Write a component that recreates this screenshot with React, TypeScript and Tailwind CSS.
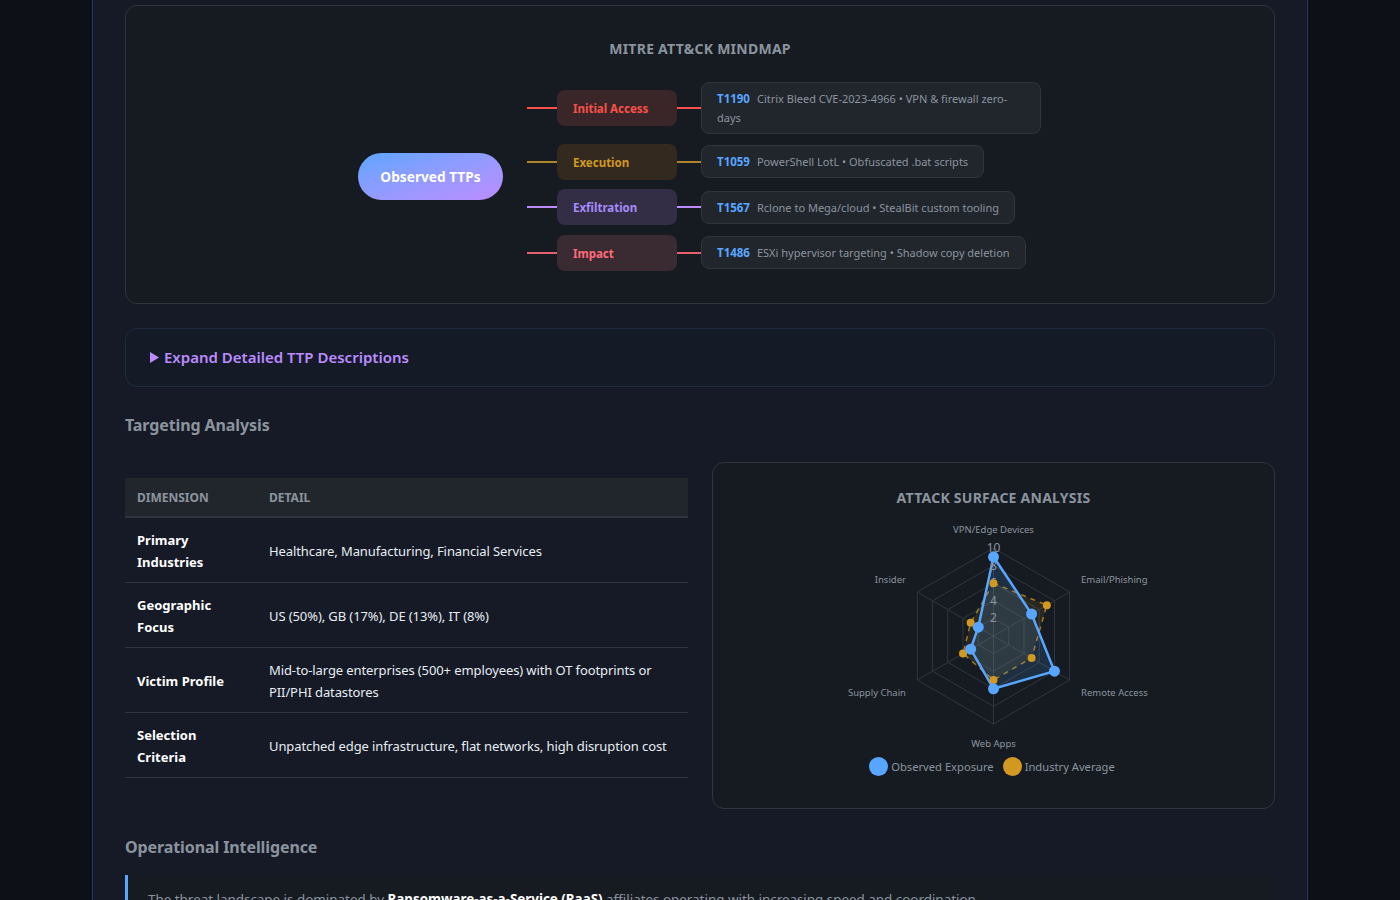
const branches = [
  { name: 'Initial Access', line: 'bg-[#f85149]', node: 'bg-[#3a2528] text-[#f85149]', id: 'T1190', text: 'Citrix Bleed CVE-2023-4966 • VPN & firewall zero-days' },
  { name: 'Execution', line: 'bg-[#b0842a]', node: 'bg-[#33291f] text-[#d29922]', id: 'T1059', text: 'PowerShell LotL • Obfuscated .bat scripts' },
  { name: 'Exfiltration', line: 'bg-[#bc8cff]', node: 'bg-[#332d45] text-[#a78bfa]', id: 'T1567', text: 'Rclone to Mega/cloud • StealBit custom tooling' },
  { name: 'Impact', line: 'bg-[#e5606e]', node: 'bg-[#3a2a32] text-[#ff6b7a]', id: 'T1486', text: 'ESXi hypervisor targeting • Shadow copy deletion' },
];

const rows = [
  { dim: 'Primary Industries', detail: 'Healthcare, Manufacturing, Financial Services' },
  { dim: 'Geographic Focus', detail: 'US (50%), GB (17%), DE (13%), IT (8%)' },
  { dim: 'Victim Profile', detail: 'Mid-to-large enterprises (500+ employees) with OT footprints or PII/PHI datastores' },
  { dim: 'Selection Criteria', detail: 'Unpatched edge infrastructure, flat networks, high disruption cost' },
];

// radar geometry, svg sits right under the card title
const cx = 280.5;
const cy = 127;
const unit = 8.8;
const angles = [0, 1, 2, 3, 4, 5].map((i) => (Math.PI / 3) * i - Math.PI / 2);
const pt = (i: number, v: number) => [cx + Math.cos(angles[i]) * v * unit, cy + Math.sin(angles[i]) * v * unit];
const poly = (vals: number[]) => vals.map((v, i) => pt(i, v).join(',')).join(' ');
const observed = [9, 5, 8, 6, 3, 2];
const average = [6, 7, 5, 5, 4, 3];

function Radar() {
  return (
    <svg width="561" height="246" viewBox="0 0 561 246" className="block">
      {[2, 4, 6, 8, 10].map((v) => (
        <polygon key={v} points={poly([v, v, v, v, v, v])} fill="none" stroke="#30363d" strokeWidth="1" />
      ))}
      {[0, 1, 2, 3, 4, 5].map((i) => {
        const [x, y] = pt(i, 10);
        return <line key={i} x1={cx} y1={cy} x2={x} y2={y} stroke="#30363d" strokeWidth="1" />;
      })}
      <polygon points={poly(average)} fill="#d29922" fillOpacity="0.1" stroke="#d29922" strokeWidth="1.5" strokeOpacity="0.75" strokeDasharray="5 5" />
      <polygon points={poly(observed)} fill="#58a6ff" fillOpacity="0.15" stroke="#58a6ff" strokeWidth="2.5" />
      <g fill="#8b949e" fontSize="12" textAnchor="middle">
        {[2, 4, 6, 8, 10].map((v) => (
          <text key={v} x={cx} y={cy - v * unit + 4}>{v}</text>
        ))}
      </g>
      {average.map((v, i) => {
        const [x, y] = pt(i, v);
        return <circle key={i} cx={x} cy={y} r="4" fill="#d29922" />;
      })}
      {observed.map((v, i) => {
        const [x, y] = pt(i, v);
        return <circle key={i} cx={x} cy={y} r="5.5" fill="#58a6ff" />;
      })}
      <g fill="#8b949e" fontSize="9.5">
        <text x={cx} y="23.5" textAnchor="middle">VPN/Edge Devices</text>
        <text x="368" y="73.5">Email/Phishing</text>
        <text x="368" y="186.5">Remote Access</text>
        <text x={cx} y="237.5" textAnchor="middle">Web Apps</text>
        <text x="193" y="186.5" textAnchor="end">Supply Chain</text>
        <text x="193" y="73.5" textAnchor="end">Insider</text>
      </g>
    </svg>
  );
}

export default function App() {
  return (
    <div className="h-[900px] overflow-hidden bg-[#0d1117] font-['Noto_Sans',sans-serif]">
      <div className="mx-auto h-full w-[1216px] border-x border-[#243a5c] bg-[#161a26] px-8 pt-[5px]">
        {/* Mindmap */}
        <div className="rounded-xl border border-[#30363d] bg-[#161b22] px-8 pb-8 pt-8">
          <h4 className="mb-[22px] text-center text-sm font-bold leading-[22px] tracking-[0.25px] text-[#8b949e]">MITRE ATT&amp;CK MINDMAP</h4>
          <div className="flex items-center justify-center pr-px">
            <div className="flex h-[47px] w-[145px] items-center justify-center rounded-full bg-gradient-to-br from-[#58a6ff] to-[#bc8cff] pt-[2px] text-[13.7px] font-bold text-white">
              Observed TTPs
            </div>
            <div className="ml-6 flex flex-col gap-[9.5px]">
              {branches.map((b) => (
                <div key={b.id} className="flex items-center">
                  <div className={`h-0.5 w-[30px] ${b.line}`} />
                  <div className={`flex h-9 w-[120px] items-center rounded-lg px-4 pt-[2px] text-[11.5px] font-bold ${b.node}`}>{b.name}</div>
                  <div className={`h-0.5 w-6 ${b.line}`} />
                  <div className="max-w-[340px] rounded-lg border border-[#30363d] bg-[#21262d] px-[15px] py-1.5 text-[11px] leading-[19px] text-[#8b949e]">
                    <span className="mr-[7px] text-[11.5px] font-bold text-[#58a6ff]">{b.id}</span>
                    {b.text}
                  </div>
                </div>
              ))}
            </div>
          </div>
        </div>

        {/* Expandable */}
        <details className="mt-6 rounded-xl border border-[#1e2a3d] bg-[#141a26] px-6 py-[18px]">
          <summary className="flex cursor-pointer list-none items-center gap-[5px] text-[15px] font-semibold leading-[21px] text-[#bc8cff]">
            <svg width="9" height="11" viewBox="0 0 9 11" fill="#bc8cff"><path d="M0 0l9 5.5L0 11z" /></svg>
            Expand Detailed TTP Descriptions
          </summary>
        </details>

        <h3 className="mt-[26px] text-base font-bold leading-6 tracking-[-0.1px] text-[#8b949e]">Targeting Analysis</h3>

        <div className="mt-[25px] grid grid-cols-2 gap-6">
          <div className="pt-4">
            <table className="w-full border-collapse text-[13px] leading-[22px] text-[#e6edf3]">
              <thead>
                <tr className="border-b-2 border-[#30363d] bg-[#21262d]">
                  <th className="w-[132px] px-3 pb-[9px] pt-[11px] text-left text-xs font-bold uppercase leading-[18px] text-[#8b949e]">Dimension</th>
                  <th className="px-3 pb-[9px] pt-[11px] text-left text-xs font-bold uppercase leading-[18px] text-[#8b949e]">Detail</th>
                </tr>
              </thead>
              <tbody>
                {rows.map((r) => (
                  <tr key={r.dim} className="border-b border-[#30363d]">
                    <td className="px-3 pb-[9px] pt-[11px] font-bold text-white">{r.dim}</td>
                    <td className="px-3 pb-[9px] pt-[11px] tracking-[-0.1px]">{r.detail}</td>
                  </tr>
                ))}
              </tbody>
            </table>
          </div>

          <div className="h-[347px] rounded-xl border border-[#30363d] bg-[#161b22]">
            <h4 className="mt-6 text-center text-sm font-bold leading-[22px] tracking-[0.25px] text-[#8b949e]">ATTACK SURFACE ANALYSIS</h4>
            <Radar />
            <div className="mt-[2px] flex items-center justify-center gap-[9px] pr-[3px] text-[11.2px] leading-[19px] text-[#8b949e]">
              <span className="flex items-center gap-[3px]">
                <span className="h-[19px] w-[19px] rounded-full bg-[#58a6ff]" />
                Observed Exposure
              </span>
              <span className="flex items-center gap-[3px]">
                <span className="h-[19px] w-[19px] rounded-full bg-[#d29922]" />
                Industry Average
              </span>
            </div>
          </div>
        </div>

        <h3 className="mt-[26px] text-base font-bold leading-6 tracking-[-0.1px] text-[#8b949e]">Operational Intelligence</h3>

        <div className="mt-4 border-l-[3px] border-[#58a6ff] bg-[#161b22] pb-4 pl-5 pr-5 pt-3 text-[13.4px] leading-6 text-[#8b949e]">
          The threat landscape is dominated by <strong className="text-white">Ransomware-as-a-Service (RaaS)</strong> affiliates operating with increasing speed and coordination.
        </div>
      </div>
    </div>
  );
}
